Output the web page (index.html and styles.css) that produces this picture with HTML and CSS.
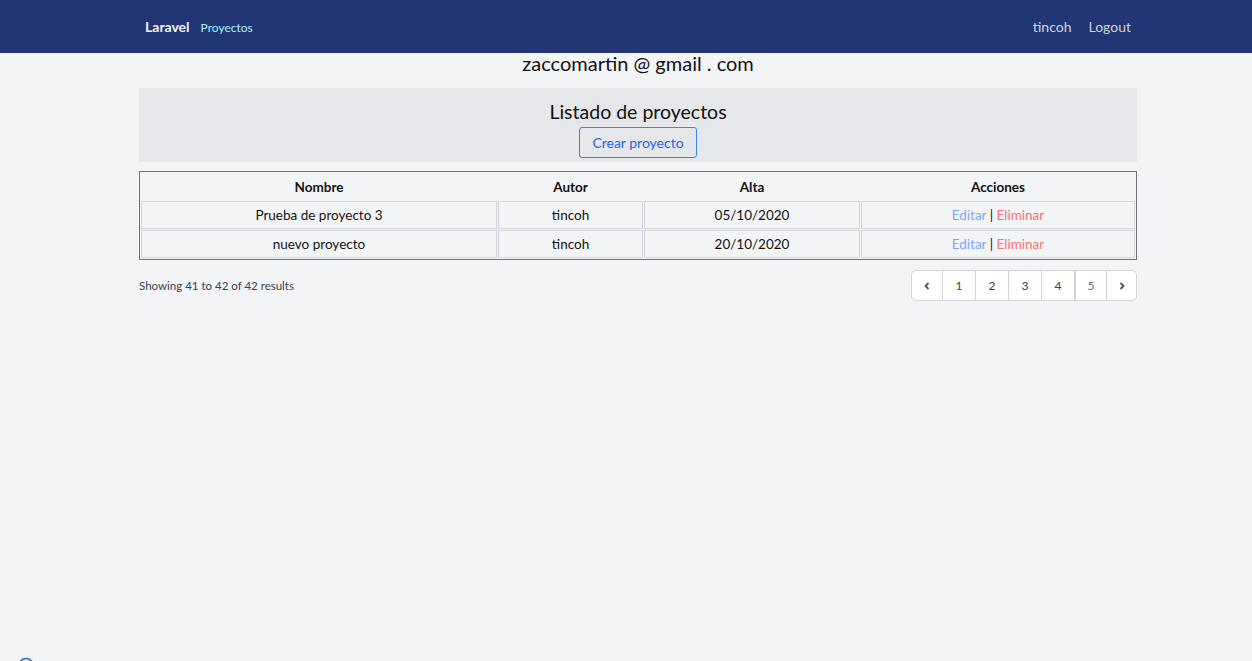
FILE: index.html
```html
<!DOCTYPE html>
<html lang="es">
<head>
<meta charset="utf-8">
<title>Proyectos</title>
<link rel="stylesheet" href="styles.css">
</head>
<body>
<nav class="nav">
  <div class="nav-inner">
    <div class="nav-left">
      <a class="brand" href="#">Laravel</a>
      <a class="nav-link" href="#">Proyectos</a>
    </div>
    <div class="nav-right">
      <a class="user" href="#">tincoh</a>
      <a class="user" href="#">Logout</a>
    </div>
  </div>
</nav>
<main class="container">
  <div class="email">zaccomartin @ gmail . com</div>
  <section class="header-box">
    <h1 class="title">Listado de proyectos</h1>
    <a class="btn" href="#">Crear proyecto</a>
  </section>
  <table class="grid">
    <thead>
      <tr>
        <th class="c-nombre">Nombre</th>
        <th class="c-autor">Autor</th>
        <th class="c-alta">Alta</th>
        <th class="c-acc">Acciones</th>
      </tr>
    </thead>
    <tbody>
      <tr>
        <td>Prueba de proyecto 3</td>
        <td>tincoh</td>
        <td>05/10/2020</td>
        <td><a class="edit" href="#">Editar</a> <span class="sep">|</span> <a class="del" href="#">Eliminar</a></td>
      </tr>
      <tr>
        <td>nuevo proyecto</td>
        <td>tincoh</td>
        <td>20/10/2020</td>
        <td><a class="edit" href="#">Editar</a> <span class="sep">|</span> <a class="del" href="#">Eliminar</a></td>
      </tr>
    </tbody>
  </table>
  <div class="pager-row">
    <p class="showing">Showing 41 to 42 of 42 results</p>
    <div class="pager">
      <a class="pg pg-arrow" href="#"><svg width="10" height="10" viewBox="0 0 10 10"><path d="M6.5 2 L3.5 5 L6.5 8" fill="none" stroke="#4b5563" stroke-width="1.8"/></svg></a>
      <a class="pg" href="#">1</a>
      <a class="pg" href="#">2</a>
      <a class="pg" href="#">3</a>
      <a class="pg" href="#">4</a>
      <span class="pg pg-current">5</span>
      <a class="pg pg-arrow" href="#"><svg width="10" height="10" viewBox="0 0 10 10"><path d="M3.5 2 L6.5 5 L3.5 8" fill="none" stroke="#4b5563" stroke-width="1.8"/></svg></a>
    </div>
  </div>
</main>
<div class="corner-badge"><svg width="18" height="18" viewBox="0 0 18 18"><circle cx="9" cy="9" r="7.5" fill="#dbe7f3" stroke="#2f6fa8" stroke-width="1.5"/></svg></div>
</body>
</html>
```
FILE: styles.css
```css
* { box-sizing: border-box; }
html, body { margin: 0; padding: 0; }
body {
  background: #f3f4f6;
  font-family: Lato, "Open Sans", sans-serif;
  color: #111;
  font-size: 14px;
  min-height: 661px;
  overflow: hidden;
}
a { text-decoration: none; }

.nav { background: #223675; height: 53px; }
.nav-inner {
  width: 1022px;
  margin: 0 auto;
  height: 100%;
  display: flex;
  align-items: center;
  justify-content: space-between;
  padding: 0 6px 0 30px;
}
.nav-left, .nav-right { display: flex; align-items: baseline; }
.brand { color: #f3f4f6; font-weight: 700; font-size: 14px; margin-right: 11px; }
.nav-link { color: #a5f3fc; font-size: 12px; }
.user { color: #d1d5db; font-size: 14px; margin-left: 17px; }

.container { width: 1022px; margin: 0 auto; padding-left: 24px; }
.email { text-align: center; font-size: 20px; line-height: 23px; height: 35px; color: #111; margin-top: -1px; }

.header-box {
  background: #e5e7eb;
  height: 74px;
  margin-top: 1px;
  display: flex;
  flex-direction: column;
  align-items: center;
  padding-top: 11px;
}
.title { margin: 0; font-size: 19.5px; font-weight: 400; line-height: 25px; color: #111; }
.btn {
  margin-top: 3px;
  display: inline-flex;
  align-items: center;
  justify-content: center;
  width: 118px;
  height: 31px;
  border: 1px solid #3b82f6;
  border-radius: 3px;
  color: #2563eb;
  font-size: 14px;
}

.grid {
  margin-top: 9px;
  width: 100%;
  border: 1px solid #6b7280;
  border-collapse: separate;
  border-spacing: 1px;
  table-layout: fixed;
}
.grid th { font-weight: 700; height: 27px; padding: 0; font-size: 13.5px; }
.grid td { border: 1px solid #d1d5db; text-align: center; height: 28px; padding: 0; font-size: 13.5px; }
.c-nombre { width: 356px; }
.c-autor { width: 145px; }
.c-alta { width: 216px; }
.c-acc { width: auto; }
.edit { color: #7aa7f5; }
.del { color: #f87171; }
.sep { color: #111; }

.pager-row { display: flex; justify-content: space-between; align-items: center; margin-top: 10px; }
.showing { margin: 0; font-size: 11.5px; color: #374151; }
.pager {
  display: flex;
  height: 31px;
  border: 1px solid #d1d5db;
  border-radius: 5px;
  background: #fff;
  overflow: hidden;
}
.pg {
  display: flex;
  align-items: center;
  justify-content: center;
  width: 33px;
  border-left: 1px solid #d1d5db;
  color: #374151;
  font-size: 12px;
}
.pg:first-child { border-left: none; width: 30px; }
.pg:last-child { width: 30px; }
.pg-current { color: #6b7280; border-left-width: 2px; width: 32px; }
.corner-badge { position: fixed; left: 17px; top: 657px; }
```
